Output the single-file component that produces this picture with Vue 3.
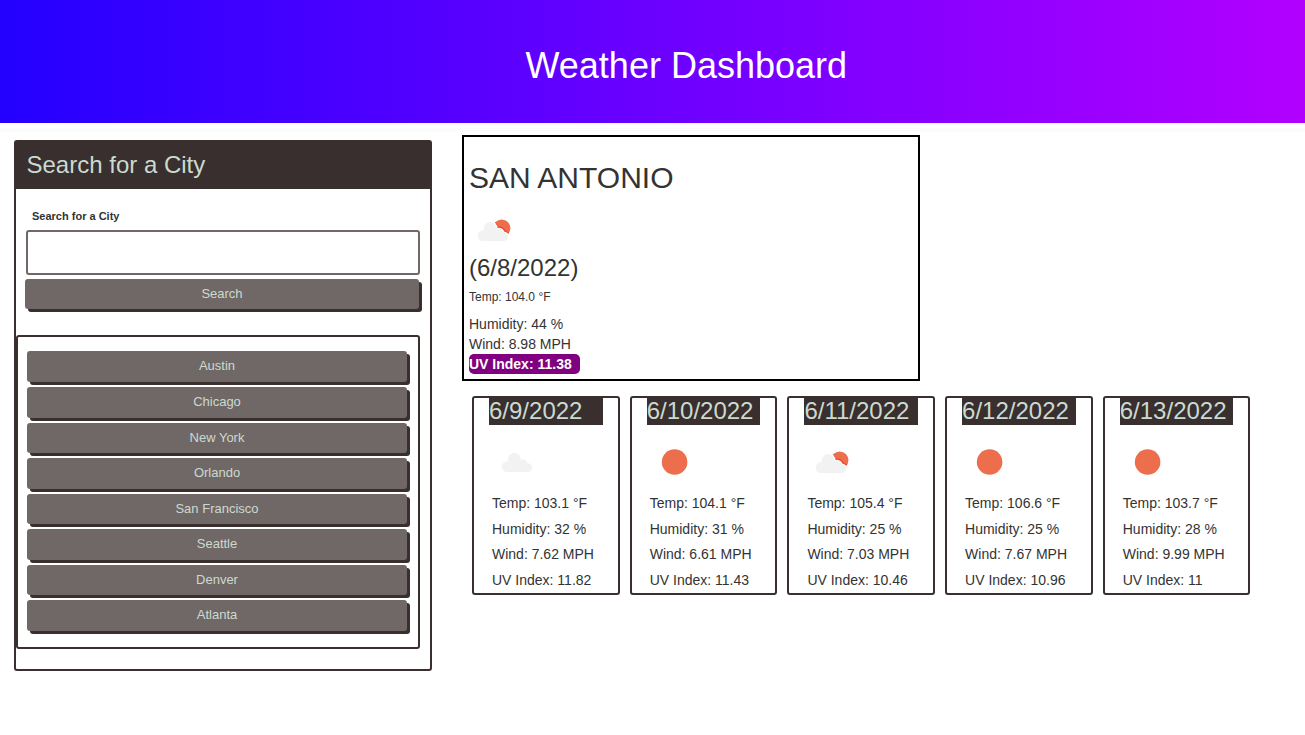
<script setup>
import { h } from 'vue'

const cities = ['Austin', 'Chicago', 'New York', 'Orlando', 'San Francisco', 'Seattle', 'Denver', 'Atlanta']

const forecast = [
  { date: '6/9/2022', icon: 'cloud', temp: '103.1', humidity: 32, wind: '7.62', uv: '11.82' },
  { date: '6/10/2022', icon: 'sun', temp: '104.1', humidity: 31, wind: '6.61', uv: '11.43' },
  { date: '6/11/2022', icon: 'partly', temp: '105.4', humidity: 25, wind: '7.03', uv: '10.46' },
  { date: '6/12/2022', icon: 'sun', temp: '106.6', humidity: 25, wind: '7.67', uv: '10.96' },
  { date: '6/13/2022', icon: 'sun', temp: '103.7', humidity: 28, wind: '9.99', uv: '11' },
]

const circle = (cx, cy, r, fill) => h('circle', { cx, cy, r, fill })

// Lobes of the cloud, standing on a flat base
const cloud = () => [
  circle(15.3, 29.6, 5.4, '#f2f2f2'),
  circle(22.4, 22.5, 6.4, '#f2f2f2'),
  circle(31, 26.6, 4.3, '#f2f2f2'),
  circle(35.8, 30.6, 4.4, '#f2f2f2'),
  h('rect', { x: 15.3, y: 24.5, width: 17, height: 10.5, fill: '#f2f2f2' }),
  h('rect', { x: 30, y: 29, width: 5.8, height: 6, fill: '#f2f2f2' }),
]

// The sun behind the cloud: a shaded edge, then a white gap round the lobes
const partly = () => [
  h('clipPath', { id: 'sun-disc' }, [circle(32.7, 23.2, 8.7)]),
  circle(32.7, 23.2, 8.7, '#ec6e4c'),
  h('g', { 'clip-path': 'url(#sun-disc)' }, [
    circle(21.2, 23.5, 8.2, '#e8492a'),
    circle(30.2, 28.2, 6.7, '#e8492a'),
    circle(35, 31.7, 6.3, '#e8492a'),
  ]),
  circle(21.2, 23.5, 7.4, '#fff'),
  circle(29.9, 28.3, 5.6, '#fff'),
  circle(34.7, 32.2, 5.6, '#fff'),
  h('g', { transform: 'translate(-1.2 1)' }, cloud()),
]

const sun = () => [circle(24.6, 25, 12.8, '#ec6e4c')]

const drawings = { cloud, partly, sun }
const WeatherIcon = (props) =>
  h('svg', { viewBox: '0 0 50 50', width: 50, height: 50 }, drawings[props.kind]())
WeatherIcon.props = ['kind']
</script>

<template>
  <header class="banner">
    <h1>Weather Dashboard</h1>
  </header>
  <main class="layout">
    <aside class="panel">
      <h3 class="panel-title">Search for a City</h3>
      <form class="search" @submit.prevent>
        <label for="city">Search for a City</label>
        <input id="city" type="text" />
        <button class="btn search-btn" type="submit">Search</button>
      </form>
      <div class="cities">
        <button v-for="city in cities" :key="city" class="btn" type="button">{{ city }}</button>
      </div>
    </aside>

    <section class="results">
      <article class="current">
        <h2>SAN ANTONIO</h2>
        <WeatherIcon class="icon" kind="partly" />
        <h3>(6/8/2022)</h3>
        <p class="temp">Temp: 104.0 °F</p>
        <p>Humidity: 44 %</p>
        <p>Wind: 8.98 MPH</p>
        <p class="uv">UV Index: 11.38</p>
      </article>

      <div class="forecast">
        <article v-for="day in forecast" :key="day.date" class="day">
          <h3>{{ day.date }}</h3>
          <WeatherIcon class="icon" :kind="day.icon" />
          <div class="stats">
            <p>Temp: {{ day.temp }} °F</p>
            <p>Humidity: {{ day.humidity }} %</p>
            <p>Wind: {{ day.wind }} MPH</p>
            <p>UV Index: {{ day.uv }}</p>
          </div>
        </article>
      </div>
    </section>
  </main>
</template>

<style>
body {
  background: #fff;
}
#app {
  font-family: "Liberation Sans", Arial, sans-serif;
  font-size: 14px;
  line-height: 20px;
  color: #333;
}
</style>

<style scoped>
* {
  box-sizing: border-box;
}
h1, h2, h3, p {
  margin: 0;
  font-weight: 400;
}
.banner {
  height: 123px;
  padding: 46px 0 0 525.5px;
  background: linear-gradient(90deg, #2400ff, #b200ff);
  color: #fff;
}
h1 {
  font-size: 36px;
  line-height: 40px;
}
.layout {
  display: flex;
  align-items: flex-start;
  padding-left: 14px;
  background: linear-gradient(#fcfcfc, #fcfcfc) 0 5px / 100% 4px no-repeat;
}
.panel {
  width: 418px;
  height: 531px;
  margin-top: 17px;
  border: 2px solid #382f2e;
  border-radius: 3px;
}
.panel-title {
  height: 47px;
  padding: 10px 10.5px 0;
  background: #382f2e;
  color: #cbdad0;
  font-size: 24px;
  line-height: 26px;
}
.search {
  padding: 20px 8px 0 9px;
  height: 146px;
}
label {
  display: block;
  margin-left: 7px;
  font-size: 11px;
  line-height: 15px;
  font-weight: 700;
}
input {
  display: block;
  width: 394px;
  height: 45px;
  margin: 6px 0 0 1px;
  border: 2px solid #706866;
  border-radius: 3px;
  background: #fff;
}
.btn {
  display: block;
  width: 380px;
  height: 30.55px;
  margin: 0 0 5px;
  padding: 0 0 1.5px;
  border: 0;
  border-radius: 3px;
  background: #706866;
  box-shadow: 3px 3px 0 #382f2e;
  color: #cbdad0;
  font: 13px "Liberation Sans", Arial, sans-serif;
}
.search-btn {
  width: 394px;
  height: 30px;
  margin: 4px 0 0;
}
.cities {
  width: 404px;
  height: 314px;
  padding: 14.45px 9px 0;
  border: 2px solid #382f2e;
  border-radius: 3px;
}
.results {
  margin: 12px 0 0 30px;
}
.current {
  width: 458px;
  height: 246px;
  padding: 25px 5px 0;
  border: 2px solid #000;
}
h2 {
  margin-bottom: 2px;
  font-size: 30px;
  line-height: 31px;
}
.icon {
  display: block;
}
.current .icon {
  margin: 12px 0 0;
}
.current h3 {
  font-size: 24px;
  line-height: 26px;
}
.current .temp {
  margin: 7px 0 8px;
  font-size: 12px;
  line-height: 18px;
}
.current .uv {
  width: 111px;
  border-radius: 5px;
  background: #800080;
  color: #fff;
  font-weight: 700;
}
.forecast {
  display: flex;
  gap: 10.2px;
  margin: 15px 0 0 10px;
}
.day {
  width: 147.5px;
  height: 199px;
  padding: 0 15px;
  border: 2px solid #382f2e;
  border-radius: 3px;
}
.day h3 {
  height: 27px;
  background: #382f2e;
  color: #cbdad0;
  font-size: 24px;
  line-height: 26px;
}
.day .icon {
  margin: 12px 0 0 3px;
}
.stats {
  display: grid;
  gap: 5.6px;
  margin: 6px 0 0 3px;
}
</style>
